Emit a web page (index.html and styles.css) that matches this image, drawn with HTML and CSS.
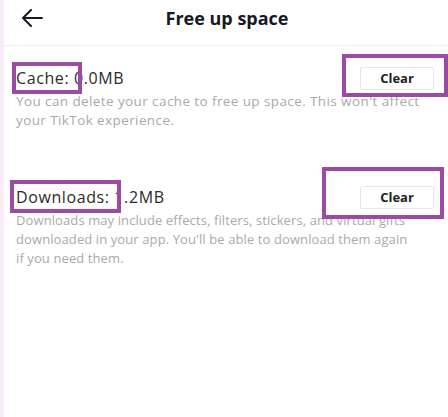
FILE: index.html
```html
<!DOCTYPE html>
<html>
<head>
<meta charset="utf-8">
<link rel="stylesheet" href="styles.css">
</head>
<body>
<div class="page">
  <header class="topbar">
    <svg class="back" width="22" height="18" viewBox="0 0 22 18">
      <path d="M21 9H2M10 1L2 9l8 8" fill="none" stroke="#161823" stroke-width="2" stroke-linecap="round" stroke-linejoin="round"/>
    </svg>
    <h1 class="title">Free up space</h1>
  </header>
  <main class="content">
    <section class="item item-cache">
      <div class="row">
        <span class="label">Cache: 0.0MB</span>
        <button class="clear">Clear</button>
      </div>
      <p class="desc">You can delete your cache to free up space. This won't affect<br>your TikTok experience.</p>
    </section>
    <section class="item item-downloads">
      <div class="row">
        <span class="label">Downloads: 1.2MB</span>
        <button class="clear">Clear</button>
      </div>
      <p class="desc desc-tight">Downloads may include effects, filters, stickers, and virtual gifts<br>downloaded in your app. You'll be able to download them again<br>if you need them.</p>
    </section>
  </main>
  <div class="mark mark-cache"></div>
  <div class="mark mark-clear1"></div>
  <div class="mark mark-downloads"></div>
  <div class="mark mark-clear2"></div>
</div>
</body>
</html>
```
FILE: styles.css
```css
html, body {
  margin: 0;
  padding: 0;
  background: #ffffff;
}
body {
  font-family: "Open Sans", "Liberation Sans", sans-serif;
  width: 448px;
  height: 417px;
  overflow: hidden;
}
.page {
  position: relative;
  width: 448px;
  height: 417px;
  background: #fff;
  border-left: 4px solid #f7ecf8;
  box-sizing: border-box;
}
.topbar {
  height: 45px;
  border-bottom: 1px solid #f0f0f0;
  display: flex;
  align-items: center;
  justify-content: center;
  position: relative;
}
.back {
  position: absolute;
  left: 17px;
  top: 9px;
}
.title {
  margin: 0;
  font-size: 18px;
  font-weight: 700;
  color: #161823;
  margin-top: -10px;
  margin-left: 2px;
}
.content {
  padding: 20px 12px 0 12px;
}
.item-downloads {
  margin-top: 55px;
}
.row {
  display: flex;
  justify-content: space-between;
  align-items: center;
  height: 24px;
}
.label {
  font-size: 16px;
  letter-spacing: 0.6px;
  color: #2b2b2b;
}
.clear {
  width: 74px;
  height: 23px;
  border: 1px solid #e6e6e6;
  border-radius: 2px;
  background: #fff;
  font-family: "Open Sans", "Liberation Sans", sans-serif;
  font-weight: 700;
  font-size: 13px;
  color: #222;
  margin-right: 2px;
  padding: 0;
}
.desc {
  margin: 2px 0 0 0;
  font-size: 13.5px;
  letter-spacing: 0.4px;
  line-height: 19px;
  color: #a9a9a9;
  white-space: nowrap;
}
.desc-tight {
  font-size: 13px;
  letter-spacing: 0.1px;
}
.mark {
  position: absolute;
  border: 4px solid #9b4aa6;
  box-sizing: border-box;
}
.mark-cache {
  left: 8px;
  top: 62px;
  width: 70px;
  height: 32px;
}
.mark-clear1 {
  left: 338px;
  top: 54px;
  width: 106px;
  height: 43px;
}
.mark-downloads {
  left: 6px;
  top: 180px;
  width: 111px;
  height: 33px;
}
.mark-clear2 {
  left: 318px;
  top: 167px;
  width: 122px;
  height: 52px;
}
```
